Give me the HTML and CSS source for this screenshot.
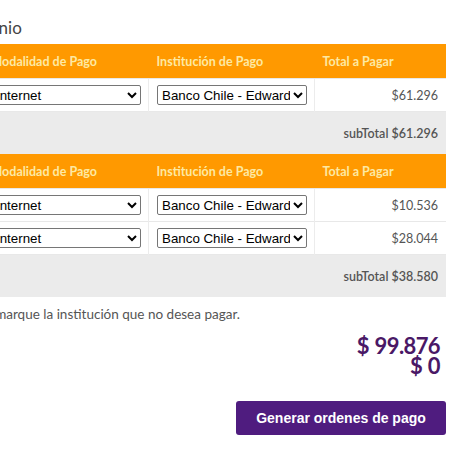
FILE: index.html
```html
<!DOCTYPE html>
<html lang="es">
<head>
    <meta charset="UTF-8">
    <title>Pago de Convenio</title>
    <link rel="stylesheet" href="styles.css">
</head>
<body>
    <div class="page">
        <h2 class="title">Detalle por Convenio</h2>

        <table class="grid">
            <thead>
                <tr>
                    <th class="col-check"></th>
                    <th class="col-mod">Modalidad de Pago</th>
                    <th class="col-inst">Institución de Pago</th>
                    <th class="col-total">Total a Pagar</th>
                </tr>
            </thead>
            <tbody>
                <tr>
                    <td class="col-check"><input type="checkbox" checked></td>
                    <td><select><option>Internet</option></select></td>
                    <td><select><option>Banco Chile - Edwards</option></select></td>
                    <td class="amount">$61.296</td>
                </tr>
                <tr class="subtotal">
                    <td colspan="4">subTotal $61.296</td>
                </tr>
            </tbody>
        </table>

        <table class="grid">
            <thead>
                <tr>
                    <th class="col-check"></th>
                    <th class="col-mod">Modalidad de Pago</th>
                    <th class="col-inst">Institución de Pago</th>
                    <th class="col-total">Total a Pagar</th>
                </tr>
            </thead>
            <tbody>
                <tr>
                    <td class="col-check"><input type="checkbox" checked></td>
                    <td><select><option>Internet</option></select></td>
                    <td><select><option>Banco Chile - Edwards</option></select></td>
                    <td class="amount">$10.536</td>
                </tr>
                <tr>
                    <td class="col-check"><input type="checkbox" checked></td>
                    <td><select><option>Internet</option></select></td>
                    <td><select><option>Banco Chile - Edwards</option></select></td>
                    <td class="amount">$28.044</td>
                </tr>
                <tr class="subtotal">
                    <td colspan="4">subTotal $38.580</td>
                </tr>
            </tbody>
        </table>

        <p class="note">Desmarque la institución que no desea pagar.</p>

        <div class="totals">
            <div>$ 99.876</div>
            <div>$ 0</div>
        </div>

        <div class="actions">
            <button class="btn-generar">Generar ordenes de pago</button>
        </div>
    </div>
</body>
</html>
```

FILE: styles.css
```css
body {
    margin: 0;
    font-family: 'Lato', 'Open Sans', sans-serif;
    color: #555;
    background-color: #fff;
    overflow: hidden;
}
.page {
    width: 505px;
    margin-left: -59px;
}
.title {
    font-size: 17px;
    font-weight: normal;
    color: #444;
    margin: 0;
    padding: 17px 0 0 0;
    height: 27px;
    text-indent: -77px;
}
.grid {
    width: 100%;
    border-collapse: collapse;
    table-layout: fixed;
}
.grid th {
    background-color: #ff9900;
    color: #fde9a3;
    font-size: 12.5px;
    font-weight: bold;
    text-align: left;
    height: 34px;
    padding: 0 8px;
}
.grid td {
    height: 32px;
    padding: 0 8px;
    border-top: 1px solid #e8e8e8;
    border-left: 1px solid #ececec;
    font-size: 12.5px;
}
.grid .col-check {
    width: 25px;
}
.grid .col-mod,
.grid .col-inst {
    width: 150px;
}
.grid select {
    width: 150px;
    height: 20px;
    font-family: 'Liberation Sans', Arial, sans-serif;
    font-size: 13.33px;
    color: #000;
    border: 1px solid #767676;
    border-radius: 2px;
    background-color: #fff;
    padding: 0;
}
.amount {
    text-align: right;
    color: #555;
}
.subtotal td {
    background-color: #ebebeb;
    height: 42px;
    border-left: none;
    text-align: right;
    font-weight: 600;
    color: #555;
}
.note {
    font-size: 13.5px;
    line-height: 16px;
    color: #555;
    margin: 9px 0 0 0;
    text-indent: 31px;
}
.totals {
    text-align: right;
    padding-right: 6px;
    margin-top: 14px;
    font-size: 22px;
    font-weight: bold;
    letter-spacing: -0.6px;
    word-spacing: 1px;
    line-height: 20px;
    color: #4a1866;
}
.actions {
    display: flex;
    justify-content: flex-end;
    margin-top: 25px;
}
.btn-generar {
    background-color: #4f1c7f;
    color: #fff;
    border: none;
    border-radius: 3px;
    width: 210px;
    height: 34px;
    font-family: 'Liberation Sans', Arial, sans-serif;
    font-size: 14px;
    font-weight: bold;
    cursor: pointer;
}
```
